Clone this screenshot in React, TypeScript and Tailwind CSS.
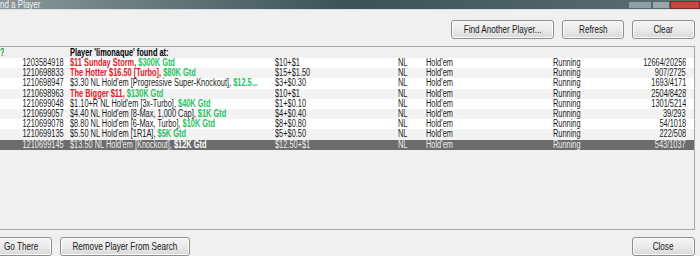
import React from 'react';

type Part = { t: string; c?: 'red' | 'green' | 'bold' };
type Row = { id: string; name: Part[]; buyin: string; players: string };

const rows: Row[] = [
  { id: '1203584918', name: [{ t: '$11 Sunday Storm, ', c: 'red' }, { t: '$300K Gtd', c: 'green' }], buyin: '$10+$1', players: '12664/20256' },
  { id: '1210698833', name: [{ t: 'The Hotter $16.50 [Turbo], ', c: 'red' }, { t: '$80K Gtd', c: 'green' }], buyin: '$15+$1.50', players: '907/2725' },
  { id: '1210698947', name: [{ t: "$3.30 NL Hold'em [Progressive Super-Knockout], " }, { t: '$12.5...', c: 'green' }], buyin: '$3+$0.30', players: '1693/4171' },
  { id: '1210698963', name: [{ t: 'The Bigger $11, ', c: 'red' }, { t: '$130K Gtd', c: 'green' }], buyin: '$10+$1', players: '2504/8428' },
  { id: '1210699048', name: [{ t: "$1.10+R NL Hold'em [3x-Turbo], " }, { t: '$40K Gtd', c: 'green' }], buyin: '$1+$0.10', players: '1301/5214' },
  { id: '1210699057', name: [{ t: "$4.40 NL Hold'em [8-Max, 1,000 Cap], " }, { t: '$1K Gtd', c: 'green' }], buyin: '$4+$0.40', players: '39/293' },
  { id: '1210699078', name: [{ t: "$8.80 NL Hold'em [6-Max, Turbo], " }, { t: '$10K Gtd', c: 'green' }], buyin: '$8+$0.80', players: '54/1018' },
  { id: '1210699135', name: [{ t: "$5.50 NL Hold'em [1R1A], " }, { t: '$5K Gtd', c: 'green' }], buyin: '$5+$0.50', players: '222/508' },
  { id: '1210699145', name: [{ t: "$13.50 NL Hold'em [Knockout], " }, { t: '$12K Gtd', c: 'bold' }], buyin: '$12.50+$1', players: '543/1037' },
];

const font = "font-['Liberation_Sans',Arial,sans-serif]";

// the app's font is condensed; squeeze Liberation Sans to match
function Cell({
  w,
  right,
  className = '',
  children,
}: {
  w: string;
  right?: boolean;
  className?: string;
  children: React.ReactNode;
}) {
  return (
    <span className={`${w} shrink-0 overflow-hidden flex ${right ? 'justify-end' : ''} ${className}`}>
      <span className={`inline-block whitespace-nowrap scale-x-[0.74] ${right ? 'origin-right' : 'origin-left'}`}>
        {children}
      </span>
    </span>
  );
}

function WinButton({ label, className }: { label: string; className: string }) {
  return (
    <button
      className={`h-[19px] shrink-0 flex items-center justify-center whitespace-nowrap rounded-[3px] border border-[#8e8f8f] bg-gradient-to-b from-[#f4f4f4] via-[#ebebeb] to-[#d8d8d8] text-[11px] leading-[11px] text-[#1a1a1a] shadow-[inset_0_0_0_1px_#fbfbfb] ${className}`}
    >
      <span className="inline-block scale-x-[0.74]">{label}</span>
    </button>
  );
}

function partClass(c?: Part['c']) {
  if (c === 'red') return 'font-bold text-[#e3202b]';
  if (c === 'green') return 'font-bold text-[#25c463]';
  if (c === 'bold') return 'font-bold text-white';
  return '';
}

export default function App() {
  return (
    <div className={`w-[700px] h-[256px] bg-[#f0f0f0] overflow-hidden flex flex-col ${font}`}>
      {/* Title bar */}
      <div className="h-[9px] shrink-0 bg-gradient-to-r from-[#8a979a] via-[#3b5356] to-[#5d6f72] flex items-end justify-between">
        <span className="inline-block origin-left scale-x-[0.8] text-[10px] leading-[9px] text-white/90 -mt-[3px]">nd a Player</span>
        <div className="flex h-[8px]">
          <div className="w-[24px] bg-[#8ea0a6] border border-[#576a70]" />
          <div className="w-[18px] bg-[#9aa8ad] border border-[#576a70]" />
          <div className="w-[30px] bg-[#c8473c] border border-[#7a2a24]" />
        </div>
      </div>
      <div className="h-px bg-[#d9dfe2] shrink-0" />

      {/* Top buttons */}
      <div className="flex justify-end gap-[8px] pr-[5px] pt-[10px] shrink-0">
        <WinButton label="Find Another Player..." className="w-[103px]" />
        <WinButton label="Refresh" className="w-[62px]" />
        <WinButton label="Clear" className="w-[63px]" />
      </div>

      {/* List */}
      <div className="mt-[7px] mr-[5px] h-[184px] border-y border-r border-[#a5a5a5] bg-[#f0f0f0] text-[10px] leading-[10px] text-[#1c1c1c] shrink-0">
        <div className="h-[11px] flex items-center">
          <Cell w="w-[4px]" className="text-[#22a35a] font-bold">?</Cell>
          <Cell w="w-[200px]" className="ml-[66px] font-bold text-black">
            Player 'limonaque' found at:
          </Cell>
        </div>
        {rows.map((r, i) => {
          const sel = i === rows.length - 1;
          return (
            <div
              key={r.id}
              className={`h-[10.2px] flex items-center ${
                sel ? 'bg-[#6c6c6c] text-[#ececec]' : i % 2 === 0 ? 'bg-white' : 'bg-[#f3f3f3]'
              }`}
            >
              <Cell w="w-[64px]" right>{r.id}</Cell>
              <Cell w="w-[202px]" className="ml-[6px]">
                {r.name.map((p, j) => (
                  <span key={j} className={partClass(p.c)}>
                    {p.t}
                  </span>
                ))}
              </Cell>
              <Cell w="w-[120px]" className="ml-[3px]">{r.buyin}</Cell>
              <Cell w="w-[28px]" className="ml-[3px]">NL</Cell>
              <Cell w="w-[127px]">Hold'em</Cell>
              <Cell w="w-[60px]">Running</Cell>
              <Cell w="w-[73px]" right>{r.players}</Cell>
            </div>
          );
        })}
      </div>

      {/* Bottom buttons */}
      <div className="flex items-center pt-[7px] pr-[5px] shrink-0">
        <WinButton label="Go There" className="w-[62px] -ml-[10px]" />
        <WinButton label="Remove Player From Search" className="w-[130px] ml-[8px]" />
        <div className="flex-1" />
        <WinButton label="Close" className="w-[63px]" />
      </div>
    </div>
  );
}
